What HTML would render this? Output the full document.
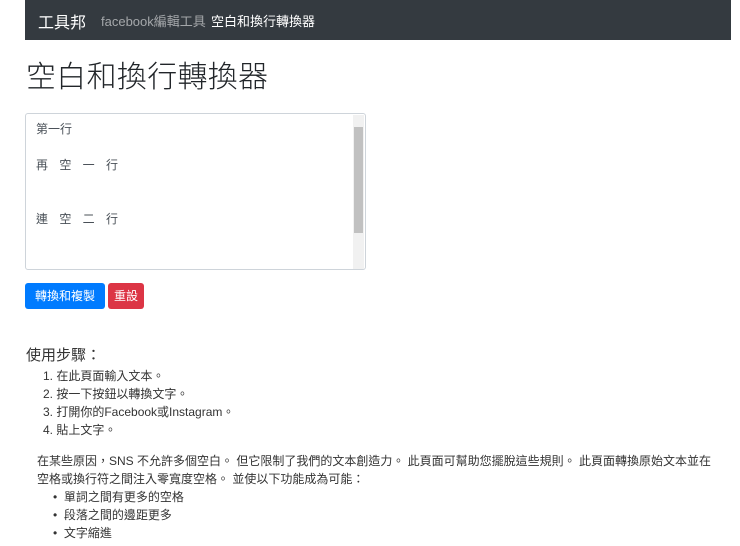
<!DOCTYPE html>
<html><head><meta charset="utf-8"><style>
body{margin:0;background:#fff;font-family:"Liberation Sans","Noto Sans CJK TC",sans-serif;color:#212529;width:740px;height:546px;overflow:hidden;position:relative}
.nav{position:absolute;left:25px;top:0;width:706px;height:40px;background:#343a40}
.nav .b{position:absolute;left:13px;top:9px;font-size:16px;color:#fff}
.nav .l1{position:absolute;left:76px;top:11px;font-size:13px;color:rgba(255,255,255,.55)}
.nav .l2{position:absolute;left:186px;top:11px;font-size:13px;color:#fff}
h1{position:absolute;left:26px;top:58px;margin:0;font-size:30px;font-weight:300;line-height:40px;letter-spacing:0.3px}
.ta{position:absolute;left:25px;top:113px;width:341px;height:157px;border:1px solid #ced4da;border-radius:3px;box-sizing:border-box;font-size:12px;color:#495057;line-height:18px;padding:6px 10px;white-space:pre}
.sp{letter-spacing:4px}
.sb{position:absolute;right:1px;top:1px;width:11px;height:154px;background:#f1f1f1}
.th{position:absolute;left:1px;top:12px;width:9px;height:106px;background:#c1c1c1}
.btn{position:absolute;top:283px;height:26px;border-radius:3px;color:#fff;font-size:12px;line-height:26px;text-align:center}
.s{position:absolute;font-size:12px;line-height:18px;color:#333;white-space:nowrap}
</style></head><body>
<div class="nav"><span class="b">工具邦</span><span class="l1">facebook編輯工具</span><span class="l2">空白和換行轉換器</span></div>
<h1>空白和換行轉換器</h1>
<div class="ta">第一行

<span class="sp">再 空 一 行</span>


<span class="sp">連 空 二 行</span><div class="sb"><div class="th"></div></div></div>
<div class="btn" style="left:25px;width:80px;background:#007bff">轉換和複製</div>
<div class="btn" style="left:108px;width:36px;background:#dc3545">重設</div>
<div class="s" style="left:26px;top:346px;font-size:15px;line-height:20px">使用步驟：</div>
<div class="s" style="left:43px;top:367px">1. 在此頁面輸入文本。</div>
<div class="s" style="left:43px;top:385px">2. 按一下按鈕以轉換文字。</div>
<div class="s" style="left:43px;top:403px">3. 打開你的Facebook或Instagram。</div>
<div class="s" style="left:43px;top:421px">4. 貼上文字。</div>
<div class="s" style="left:37px;top:452px">在某些原因，SNS 不允許多個空白。 但它限制了我們的文本創造力。 此頁面可幫助您擺脫這些規則。 此頁面轉換原始文本並在</div>
<div class="s" style="left:37px;top:470px">空格或換行符之間注入零寬度空格。 並使以下功能成為可能：</div>
<div class="s" style="left:53px;top:488px">•&nbsp;&nbsp;單詞之間有更多的空格</div>
<div class="s" style="left:53px;top:506px">•&nbsp;&nbsp;段落之間的邊距更多</div>
<div class="s" style="left:53px;top:524px">•&nbsp;&nbsp;文字縮進</div>
</body></html>
